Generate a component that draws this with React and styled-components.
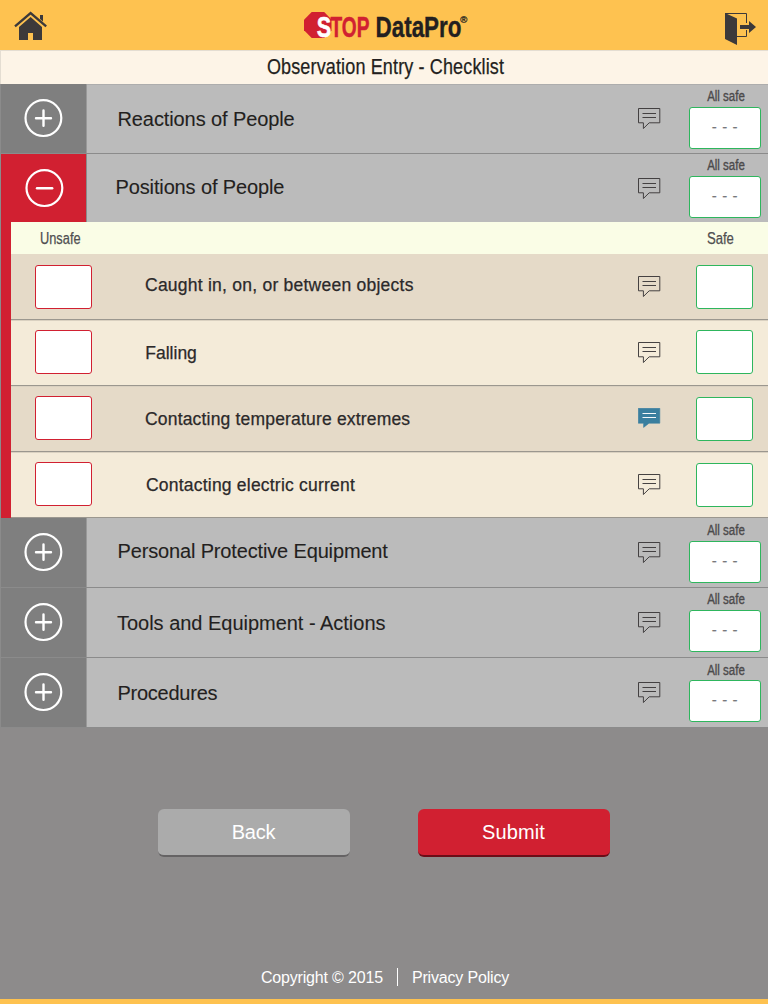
import React from "react";
import styled, { createGlobalStyle } from "styled-components";

const sans = `"Liberation Sans", Arial, Helvetica, sans-serif`;

const GlobalStyle = createGlobalStyle`
  * { box-sizing: border-box; }
  body { margin: 0; background: #8d8b8b; font-family: ${sans}; }
`;

const Page = styled.div`
  display: flex;
  flex-direction: column;
  width: 768px;
  height: 1004px;
  overflow: hidden;
  background: #8d8b8b;
  border-bottom: 5px solid #fec250;
`;

const Condensed = styled.span`
  display: inline-block;
  white-space: nowrap;
  transform: scaleX(${(p) => p.$scale || 0.82});
  transform-origin: ${(p) => p.$origin || "center"};
`;

const TopBar = styled.header`
  display: flex;
  justify-content: space-between;
  align-items: flex-start;
  height: 51px;
  flex: none;
  background: #fec250;
  border-bottom: 1px solid #e4ddd2;
`;

const HomeIcon = styled.svg`
  display: block;
  margin: 11px 0 0 14px;
`;

const Logo = styled.svg`
  display: block;
  margin: 8px 0 0 0;
`;

const ExitIcon = styled.svg`
  display: block;
  margin: 12px 11px 0 0;
`;

const PageTitle = styled.h1`
  flex: none;
  margin: 0;
  height: 33px;
  padding-left: 2px;
  border-left: 1px solid #e4ddd2;
  background: #fdf4e7;
  text-align: center;
  font: 400 21.5px/32px ${sans};
  letter-spacing: 0.16px;
  color: #231f20;
  -webkit-text-stroke: 0.25px #231f20;
`;

const Checklist = styled.main`
  display: flex;
  flex-direction: column;
  flex: none;
  border-left: 1px solid #8b8b8b;
`;

const GroupRow = styled.section`
  display: flex;
  height: ${(p) => (p.$open ? 68 : 70)}px;
  background: #bbbbbb;
  border-bottom: ${(p) => (p.$open ? "none" : "1px solid #8b8b8b")};
  box-shadow: ${(p) => (p.$first ? "inset 0 1px 0 #adadad" : "none")};
`;

const Toggle = styled.button`
  display: flex;
  justify-content: center;
  width: 86px;
  flex: none;
  margin: 0;
  padding: ${(p) => (p.$open ? "15px 0 0 1px" : "15px 1px 0 0")};
  border: 0;
  border-right: 1px solid ${(p) => (p.$open ? "#8b8b8b" : "#999999")};
  background: ${(p) => (p.$open ? "#d12031" : "#7f7f7f")};
  svg { display: block; flex: none; }
`;

const GroupName = styled.h2`
  flex: 1;
  margin: 0;
  padding: ${(p) => p.$top}px 0 0 ${(p) => p.$left}px;
  font: 400 20px/24px ${sans};
  letter-spacing: ${(p) => p.$spacing}px;
  white-space: nowrap;
  color: #231f20;
  -webkit-text-stroke: 0.1px #231f20;
`;

const NoteButton = styled.span`
  flex: none;
  width: 24px;
  padding-top: ${(p) => p.$top}px;
  svg { display: block; }
`;

const AllSafe = styled.div`
  display: flex;
  flex-direction: column;
  align-items: center;
  flex: none;
  width: 72px;
  margin: ${(p) => p.$top}px 7px 0 27px;
  font: 400 14px/16px ${sans};
  color: #4c4a4b;
  -webkit-text-stroke: 0.35px #4c4a4b;
`;

const AllSafeLabel = styled(Condensed)`
  margin-left: 2px;
`;

const AllSafeBox = styled.div`
  width: 72px;
  height: 42px;
  margin-top: ${(p) => p.$gap}px;
  border: 1px solid #2eb65d;
  border-radius: 3px;
  background: #fff;
  text-align: center;
  font: 400 15px/38px ${sans};
  letter-spacing: 0.6px;
  color: #77787b;
  -webkit-text-stroke: 0.2px #77787b;
`;

const OpenPanel = styled.div`
  display: flex;
  flex-direction: column;
  border-left: 10px solid #d12031;
`;

const ColumnHeads = styled.div`
  display: flex;
  justify-content: space-between;
  height: 32px;
  padding: 0 34px 0 29px;
  background: #fafde6;
  font: 400 16px/33px ${sans};
  color: #4f4f51;
  -webkit-text-stroke: 0.25px #4f4f51;
`;

const ItemRow = styled.div`
  display: flex;
  align-items: flex-start;
  height: 66px;
  background: ${(p) => (p.$dark ? "#e5dac8" : "#f4ebd9")};
  border-bottom: 1px solid #9b978f;
  box-shadow: ${(p) => (p.$first ? "none" : "inset 0 1px 0 #dad1c1")};
`;

const CheckBox = styled.div`
  flex: none;
  width: 57px;
  height: 44px;
  margin: ${(p) => p.$top}px ${(p) => (p.$safe ? 15 : 0)}px 0 ${(p) => (p.$safe ? 34 : 24)}px;
  border: 1px solid ${(p) => (p.$safe ? "#2eb65d" : "#d12031")};
  border-radius: 3px;
  background: #fff;
`;

const ItemName = styled.div`
  flex: 1;
  padding: ${(p) => p.$top}px 0 0 ${(p) => p.$left}px;
  font: 400 17.5px/20px ${sans};
  letter-spacing: ${(p) => p.$spacing}px;
  white-space: nowrap;
  color: #2b292a;
  -webkit-text-stroke: 0.25px #2b292a;
`;

const Actions = styled.div`
  display: flex;
  justify-content: center;
  gap: 68px;
  flex: none;
  padding-top: 81px;
`;

const ActionButton = styled.button`
  width: 192px;
  height: 48px;
  padding: 0 1px 0 0;
  border: 0;
  border-bottom: 2px solid ${(p) => (p.$primary ? "#6b0d18" : "#656364")};
  border-radius: 6px;
  background: ${(p) => (p.$primary ? "#d12031" : "#ababab")};
  font: 400 20px/46px ${sans};
  letter-spacing: ${(p) => (p.$primary ? 0.1 : -0.2)}px;
  color: #fff;
`;

const Footer = styled.footer`
  display: flex;
  justify-content: center;
  align-items: center;
  gap: 14px;
  margin-top: auto;
  padding: 0 0 11px 2px;
  font: 400 16px/20px ${sans};
  letter-spacing: -0.17px;
  color: #fff;
`;

const FooterText = styled.span`
  padding-top: 2px;
`;

const FooterRule = styled.span`
  width: 1px;
  height: 18px;
  background: #fff;
`;

function ToggleIcon({ open }) {
  return (
    <svg width="40" height="40" viewBox="0 0 40 40" fill="none" stroke="#fff">
      <circle cx="20.4" cy="19.1" r="17.9" strokeWidth="2.2" />
      <path d={open ? "M13 19.2H28.2" : "M13 19.2H28M20.5 11.5V26.8"} strokeWidth="2.4" strokeLinecap="round" />
    </svg>
  );
}

function NoteIcon({ filled }) {
  return (
    <svg width="24" height="22" viewBox="0 0 24 22" fill="none">
      <path
        d={filled ? "M.3 .3H21.8V15.2H11L5.6 19.4V15.2H.3Z" : "M.5 .5H21.8V14.8H11.2L5.4 20.5V14.8H.5Z"}
        fill={filled ? "#3a7f9f" : "none"}
        stroke={filled ? "#3a7f9f" : "#3c393a"}
        strokeWidth={filled ? 0.6 : 0.95}
      />
      <path d="M4.5 5.5H18M4.5 9.5H18" stroke={filled ? "#fff" : "#3c393a"} strokeWidth="0.95" />
    </svg>
  );
}

const before = [
  { name: "Reactions of People", left: 30.5, top: 23, spacing: -0.1, note: 24, label: 4, gap: 3 },
  { name: "Positions of People", left: 28.5, top: 21, spacing: -0.13, note: 24, label: 3, gap: 3, open: true },
];

const after = [
  { name: "Personal Protective Equipment", left: 30.5, top: 21, spacing: -0.15, note: 24, label: 4, gap: 3 },
  { name: "Tools and Equipment - Actions", left: 30, top: 23, spacing: -0.02, note: 24, label: 3, gap: 3 },
  { name: "Procedures", left: 30.5, top: 23, spacing: -0.25, note: 24, label: 4, gap: 2 },
];

const items = [
  { name: "Caught in, on, or between objects", left: 53, top: 21, spacing: 0.24, note: 22, unsafe: 11, safe: 11 },
  { name: "Falling", left: 53.3, top: 23, spacing: 0.0, note: 22, unsafe: 10, safe: 10 },
  { name: "Contacting temperature extremes", left: 53, top: 23, spacing: 0.18, note: 22, unsafe: 10, safe: 11, noted: true },
  { name: "Contacting electric current", left: 54, top: 23, spacing: 0.21, note: 21.5, unsafe: 10, safe: 11 },
];

function Group({ group, first }) {
  return (
    <GroupRow $open={group.open} $first={first}>
      <Toggle $open={group.open} aria-label={group.name}>
        <ToggleIcon open={group.open} />
      </Toggle>
      <GroupName $top={group.top} $left={group.left} $spacing={group.spacing}>{group.name}</GroupName>
      <NoteButton $top={group.note}><NoteIcon /></NoteButton>
      <AllSafe $top={group.label}>
        <AllSafeLabel>All safe</AllSafeLabel>
        <AllSafeBox $gap={group.gap}>- - -</AllSafeBox>
      </AllSafe>
    </GroupRow>
  );
}

export default function App() {
  return (
    <Page>
      <GlobalStyle />
      <TopBar>
        <HomeIcon width="34" height="30" viewBox="0 0 34 30">
          <path d="M1 15.3L16.6 2L32.2 15.3" fill="none" stroke="#3c393a" strokeWidth="2.3" />
          <path d="M26 4H29V10.6L26 8Z" fill="#3c393a" />
          <path d="M5 16L16.6 6L28 16V29H19V22H14V29H5Z" fill="#3c393a" />
        </HomeIcon>
        <Logo width="180" height="36" viewBox="296 8 180 36">
          <path d="M311.7 12H324.2L331.5 19.5V30.5L324.2 38H311.7L304 30.3V19.7Z" fill="#d12031" />
          <g fontFamily={sans} fontWeight="700" fontSize="30">
            <text x="330.5" y="37.4" fill="#d12031" stroke="#d12031" strokeWidth="0.5" textLength="39" lengthAdjust="spacingAndGlyphs">TOP</text>
            <text x="316.8" y="37.4" fill="#fff" stroke="#fff" strokeWidth="0.6" textLength="14.4" lengthAdjust="spacingAndGlyphs">S</text>
            <text x="375.5" y="37.4" fill="#231f20" stroke="#231f20" strokeWidth="0.4" textLength="86" lengthAdjust="spacingAndGlyphs">DataPro</text>
          </g>
          <text x="460.3" y="22.5" fontFamily={sans} fontSize="9.5" fill="#231f20" stroke="#231f20" strokeWidth="0.3">®</text>
        </Logo>
        <ExitIcon width="33" height="34" viewBox="0 0 33 34">
          <path d="M1 1.5H22.5V11M22.5 18V24.5H13" fill="none" stroke="#3c393a" strokeWidth="1" />
          <path d="M1 1L13 6.5V33L1 27Z" fill="#3c393a" />
          <path d="M16 13H25V9L32 15L25 21V17H16Z" fill="#3c393a" />
        </ExitIcon>
      </TopBar>
      <PageTitle><Condensed $scale={0.838}>Observation Entry - Checklist</Condensed></PageTitle>
      <Checklist>
        {before.map((g, i) => <Group key={g.name} group={g} first={i === 0} />)}
        <OpenPanel>
          <ColumnHeads>
            <Condensed $scale={0.8} $origin="left">Unsafe</Condensed>
            <Condensed $origin="right">Safe</Condensed>
          </ColumnHeads>
          {items.map((item, i) => (
            <ItemRow key={item.name} $dark={i % 2 === 0} $first={i === 0}>
              <CheckBox $top={item.unsafe} />
              <ItemName $top={item.top} $left={item.left} $spacing={item.spacing}>{item.name}</ItemName>
              <NoteButton $top={item.note}><NoteIcon filled={item.noted} /></NoteButton>
              <CheckBox $safe $top={item.safe} />
            </ItemRow>
          ))}
        </OpenPanel>
        {after.map((g) => <Group key={g.name} group={g} />)}
      </Checklist>
      <Actions>
        <ActionButton>Back</ActionButton>
        <ActionButton $primary>Submit</ActionButton>
      </Actions>
      <Footer>
        <FooterText>Copyright © 2015</FooterText>
        <FooterRule />
        <FooterText>Privacy Policy</FooterText>
      </Footer>
    </Page>
  );
}
